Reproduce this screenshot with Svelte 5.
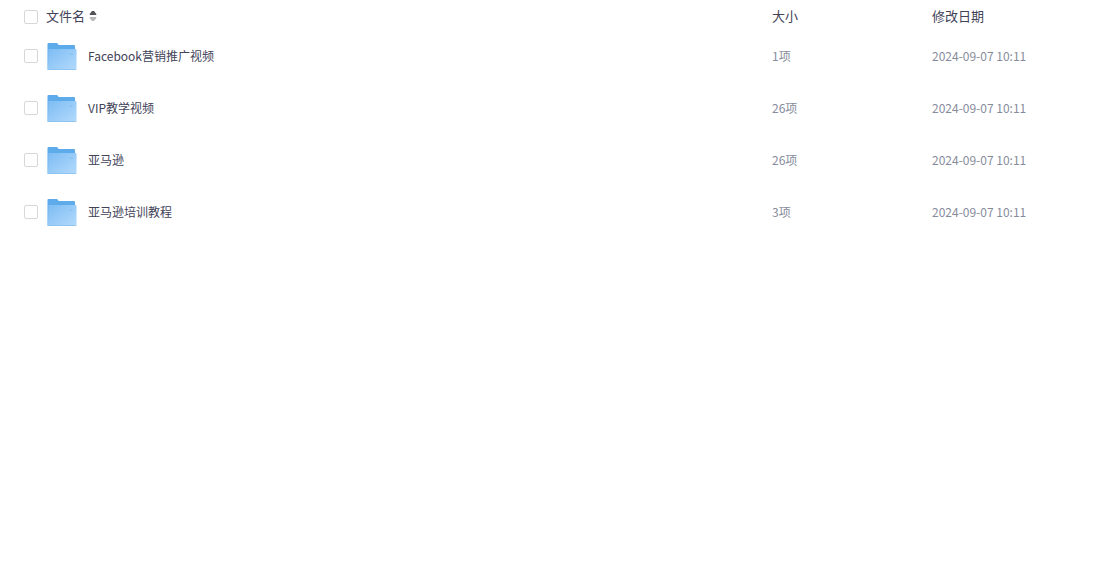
<script>
  const files = [
    { name: 'Facebook营销推广视频', size: '1项', date: '2024-09-07 10:11' },
    { name: 'VIP教学视频', size: '26项', date: '2024-09-07 10:11' },
    { name: '亚马逊', size: '26项', date: '2024-09-07 10:11' },
    { name: '亚马逊培训教程', size: '3项', date: '2024-09-07 10:11' },
  ];
  let selected = $state(files.map(() => false));
  let ascending = $state(true);
  let order = $derived(ascending ? files.map((_, i) => i) : files.map((_, i) => files.length - 1 - i));
  let all = $derived(selected.every(Boolean));
</script>

<table>
  <thead>
    <tr>
      <th class="check"><input type="checkbox" aria-label="全选" checked={all} onchange={(e) => (selected = files.map(() => e.currentTarget.checked))} /></th>
      <th class="name">
        <button onclick={() => (ascending = !ascending)}>
          文件名
          <svg class="sort" class:flip={!ascending} viewBox="0 0 8 12" aria-hidden="true">
            <path d="M.7 5V4L3 1h2l2.300 3v1z" fill="#515157" />
            <path d="M.7 7v1L3 11h2l2.300-3V7z" fill="#b7b7ba" />
          </svg>
        </button>
      </th>
      <th class="size">大小</th>
      <th class="date">修改日期</th>
    </tr>
  </thead>
  <tbody>
    {#each order as i (i)}
      <tr>
        <td class="check"><input id="file-{i}" type="checkbox" bind:checked={selected[i]} /></td>
        <td class="name">
          <label for="file-{i}">
            <svg class="folder" viewBox="0 0 32 32" aria-hidden="true">
              <defs>
                <linearGradient id="front-{i}" x1="0" y1="0" x2="1" y2="1">
                  <stop offset="0" stop-color="#7dbcf3" />
                  <stop offset="1" stop-color="#b3dafc" />
                </linearGradient>
              </defs>
              <path d="M1.500 4q0-1 1-1h8q1 0 1.500 1l.6 1h15.400q1 0 1 1v23.500h-27.500z" fill="#5eabeb" />
              <path d="M2.400 9h27.200q.9 0 .9.900v19.200q0 .7-.7.700H2z" fill="url(#front-{i})" />
              <path d="M1.500 29.300h28.800v.7H1.500z" fill="#83bdee" />
              <path d="M23 13.500h4v1.500h-4z" fill="#84bdee" opacity=".6" />
            </svg>
            {files[i].name}
          </label>
        </td>
        <td class="size">{files[i].size}</td>
        <td class="date">{files[i].date}</td>
      </tr>
    {/each}
  </tbody>
</table>

<style>
  :global(body) {
    margin: 0;
    background: #fff;
  }
  table {
    width: 100%;
    table-layout: fixed;
    border-collapse: collapse;
    font: 12px/20px "Noto Sans CJK SC", sans-serif;
    color: #424259;
  }
  th,
  td {
    padding: 0;
    text-align: left;
    vertical-align: middle;
    font-weight: 400;
  }
  thead th {
    height: 28px;
    padding-top: 2px;
    font-size: 13px;
  }
  thead .check {
    height: 26px;
    padding-top: 4px;
  }
  tbody td {
    height: 52px;
  }
  .check {
    width: 22px;
    padding-left: 24px;
  }
  .size {
    width: 160px;
  }
  .date {
    width: 170px;
  }
  tbody .size,
  tbody .date {
    color: #878c9c;
  }
  input {
    appearance: none;
    display: block;
    box-sizing: border-box;
    width: 14px;
    height: 14px;
    margin: 0;
    border: 1px solid #d7d7da;
    border-radius: 2px;
    background: #fff;
  }
  input:checked {
    border-color: #5eabeb;
    background: #5eabeb;
  }
  button {
    display: flex;
    align-items: center;
    gap: 4px;
    padding: 0;
    border: 0;
    background: none;
    color: inherit;
    font: inherit;
    cursor: pointer;
  }
  label {
    display: flex;
    align-items: center;
    gap: 10px;
  }
  .sort {
    width: 8px;
    height: 12px;
  }
  .flip {
    transform: scaleY(-1);
  }
  .folder {
    flex: none;
    width: 32px;
    height: 32px;
  }
</style>
